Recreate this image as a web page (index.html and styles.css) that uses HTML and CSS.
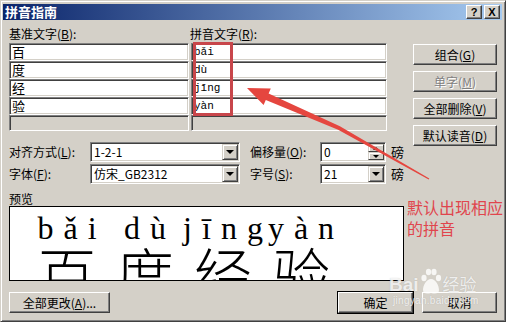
FILE: index.html
```html
<!DOCTYPE html>
<html lang="zh">
<head>
<meta charset="utf-8">
<title>拼音指南</title>
<link rel="stylesheet" href="styles.css">
</head>
<body>
<div class="dialog">
  <div class="titlebar">
    <span class="title">拼音指南</span>
    <span class="tbtn">?</span>
    <span class="tbtn">X</span>
  </div>

  <div class="main">
    <div class="table">
      <div class="labels">
        <span class="lab-base">基准文字(<u>B</u>):</span>
        <span class="lab-py">拼音文字(<u>R</u>):</span>
      </div>
      <div class="rows">
        <div class="cell base">百</div><div class="cell py">bǎi</div>
        <div class="cell base">度</div><div class="cell py">dù</div>
        <div class="cell base">经</div><div class="cell py">jīng</div>
        <div class="cell base">验</div><div class="cell py">yàn</div>
        <div class="cell base empty"></div><div class="cell py empty"></div>
      </div>
    </div>

    <div class="side">
      <div class="btn">组合(<u>G</u>)</div>
      <div class="btn disabled">单字(<u>M</u>)</div>
      <div class="btn">全部删除(<u>V</u>)</div>
      <div class="btn">默认读音(<u>D</u>)</div>
    </div>

    <div class="opts">
      <div class="opt-row">
        <span class="opt-lab">对齐方式(<u>L</u>):</span>
        <div class="field combo wide"><span class="val">1-2-1</span><span class="drop"><i class="tri-down"></i></span></div>
        <span class="opt-lab2">偏移量(<u>O</u>):</span>
        <div class="field combo narrow"><span class="val">0</span><span class="spin"><span class="half"><i class="tri-up"></i></span><span class="half"><i class="tri-down small"></i></span></span></div>
        <span class="unit">磅</span>
      </div>
      <div class="opt-row">
        <span class="opt-lab">字体(<u>F</u>):</span>
        <div class="field combo wide"><span class="val">仿宋_GB2312</span><span class="drop"><i class="tri-down"></i></span></div>
        <span class="opt-lab2">字号(<u>S</u>):</span>
        <div class="field combo narrow"><span class="val">21</span><span class="drop"><i class="tri-down"></i></span></div>
        <span class="unit">磅</span>
      </div>
    </div>

    <div class="preview-block">
      <div class="preview-lab">预览</div>
      <div class="preview">
        <div class="ruby"><span class="rt">bǎi</span><span class="rb">百</span></div>
        <div class="ruby"><span class="rt">dù</span><span class="rb">度</span></div>
        <div class="ruby"><span class="rt">jīng</span><span class="rb">经</span></div>
        <div class="ruby"><span class="rt">yàn</span><span class="rb">验</span></div>
      </div>
    </div>

    <div class="bottom">
      <div class="btn all">全部更改(<u>A</u>)...</div>
      <div class="btn ok">确定</div>
      <div class="btn cancel">取消</div>
    </div>
  </div>

  <!-- annotation drawn on top of the screenshot -->
  <div class="note">默认出现相应<br>的拼音</div>
  <svg class="marks" width="506" height="322" viewBox="0 0 506 322">
    <rect x="193.5" y="42.5" width="37" height="71" fill="none" stroke="#c8464b" stroke-width="3"/>
    <polygon fill="#e5463f" points="246,87 269.8,87.5 267.6,92.6 338.9,125.2 428.3,177.5 427.7,178.5 337.1,128.8 264.8,99 262.6,104.1"/>
  </svg>

  <div class="watermark">
    <div class="wm-logo">
      <span class="wm-bai">Bai</span>
      <svg class="wm-paw" width="22" height="28" viewBox="0 0 22 28">
        <ellipse cx="4" cy="11" rx="2.6" ry="3.2"/>
        <ellipse cx="8.5" cy="5" rx="2.6" ry="3.3"/>
        <ellipse cx="14" cy="5" rx="2.6" ry="3.3"/>
        <ellipse cx="18.5" cy="11" rx="2.6" ry="3.2"/>
        <path d="M11 12 C6 12 3 19 3 23 C3 27 7 27 11 26 C15 27 19 27 19 23 C19 19 16 12 11 12 Z"/>
      </svg>
      <span class="wm-jy">经验</span>
    </div>
    <div class="wm-url">jingyan.baidu.com</div>
  </div>
</div>
</body>
</html>
```

FILE: styles.css
```css
body {
  margin: 0;
  background: #d4d0c8;
  font-family: "Noto Sans CJK SC", "Liberation Sans", sans-serif;
  font-size: 12px;
  color: #000;
}
u { text-decoration: underline; }

.dialog {
  position: relative;
  box-sizing: border-box;
  width: 506px;
  height: 322px;
  padding: 3px 3px 0 2px;
  background: #d4d0c8;
  border: 1px solid;
  border-color: #d4d0c8 #404040 #404040 #d4d0c8;
  box-shadow: inset 1px 1px #fff, inset -1px -1px #808080;
  overflow: hidden;
}

/* title bar */
.titlebar {
  display: flex;
  align-items: center;
  height: 16px;
  padding-left: 2px;
  background: linear-gradient(to right, #0a246a, #a6caf0);
}
.title {
  flex: 1;
  color: #fff;
  font-weight: bold;
  font-size: 13px;
  line-height: 16px;
}
.tbtn {
  box-sizing: border-box;
  width: 16px;
  height: 14px;
  margin-right: 2px;
  background: #d4d0c8;
  border: 1px solid;
  border-color: #fff #404040 #404040 #fff;
  box-shadow: inset -1px -1px #808080;
  font-family: "Liberation Sans", sans-serif;
  font-weight: bold;
  font-size: 11px;
  line-height: 12px;
  text-align: center;
}

/* main layout */
.main {
  display: grid;
  grid-template-columns: 395px 84px;
  column-gap: 9px;
  padding: 6px 0 0 6px;
}

.table { grid-column: 1; grid-row: 1; }
.labels {
  display: flex;
  height: 16px;
  line-height: 16px;
  margin-bottom: 1px;
}
.lab-base { width: 181px; }

.rows {
  display: grid;
  grid-template-columns: 180px 196px;
  grid-template-rows: repeat(4, 18px) 16px;
  column-gap: 2px;
}

.field, .cell {
  box-sizing: border-box;
  background: #fff;
  border: 1px solid;
  border-color: #808080 #fff #fff #808080;
  box-shadow: inset 1px 1px #404040, inset -1px -1px #d4d0c8;
}
.cell {
  padding-left: 2px;
  line-height: 16px;
}
.cell.base { font-size: 13px; }
.cell.py {
  font-family: "Liberation Mono", monospace;
  font-size: 11px;
}
.cell.empty { background: #d4d0c8; }

/* side buttons */
.side {
  grid-column: 2;
  grid-row: 1 / span 2;
  align-self: start;
  display: flex;
  flex-direction: column;
  gap: 6px;
  margin-top: 18px;
}

.btn {
  box-sizing: border-box;
  height: 21px;
  background: #d4d0c8;
  border: 1px solid;
  border-color: #fff #404040 #404040 #fff;
  box-shadow: inset -1px -1px #808080;
  line-height: 19px;
  text-align: center;
  font-size: 12px;
}
.btn.disabled {
  color: #808080;
  text-shadow: 1px 1px #fff;
}

/* option rows */
.opts {
  grid-column: 1;
  grid-row: 2;
  margin-top: 11px;
  display: flex;
  flex-direction: column;
  gap: 2px;
}
.opt-row {
  display: flex;
  align-items: center;
  height: 20px;
}
.opt-lab { width: 81px; line-height: 20px; }
.opt-lab2 { width: 70px; margin-left: 10px; line-height: 20px; }
.unit { margin-left: 5px; font-size: 13px; line-height: 20px; }

.combo {
  display: flex;
  align-items: center;
  height: 20px;
  padding: 1px;
}
.combo.wide { width: 150px; }
.combo.narrow { width: 66px; }
.val {
  flex: 1;
  padding-left: 2px;
  line-height: 16px;
  font-size: 12px;
}
.drop, .spin {
  box-sizing: border-box;
  width: 16px;
  height: 16px;
  background: #d4d0c8;
  border: 1px solid;
  border-color: #d4d0c8 #404040 #404040 #d4d0c8;
  box-shadow: inset 1px 1px #fff, inset -1px -1px #808080;
  display: flex;
  align-items: center;
  justify-content: center;
}
.spin {
  flex-direction: column;
  border: 0;
  box-shadow: none;
  background: none;
}
.spin .half {
  box-sizing: border-box;
  width: 16px;
  height: 8px;
  background: #d4d0c8;
  border: 1px solid;
  border-color: #d4d0c8 #404040 #404040 #d4d0c8;
  box-shadow: inset 1px 1px #fff;
  display: flex;
  align-items: center;
  justify-content: center;
}
.tri-down {
  width: 0;
  height: 0;
  border-left: 4px solid transparent;
  border-right: 4px solid transparent;
  border-top: 4px solid #000;
}
.tri-down.small, .tri-up {
  border-left-width: 3px;
  border-right-width: 3px;
  border-top-width: 3px;
}
.tri-up {
  width: 0;
  height: 0;
  border-left: 3px solid transparent;
  border-right: 3px solid transparent;
  border-bottom: 3px solid #000;
}

/* preview */
.preview-block {
  grid-column: 1;
  grid-row: 3;
}
.preview-lab {
  margin-top: 8px;
  line-height: 14px;
}
.preview {
  box-sizing: border-box;
  height: 75px;
  background: #fff;
  border: 1px solid #000;
  overflow: hidden;
  display: grid;
  grid-template-columns: repeat(4, 78px);
  padding: 5px 0 0 18px;
}
.ruby {
  display: flex;
  flex-direction: column;
  align-items: center;
}
.rt {
  font-family: "Liberation Serif", serif;
  font-size: 32px;
  line-height: 32px;
  letter-spacing: 10px;
  margin-right: -10px;
}
.rb {
  margin-top: -2px;
  font-size: 58px;
  line-height: 60px;
  font-weight: 300;
}

/* bottom buttons */
.bottom {
  grid-column: 1 / -1;
  grid-row: 4;
  display: flex;
  margin-top: 11px;
}
.btn.all { width: 101px; }
.btn.ok {
  width: 75px;
  margin-left: auto;
  outline: 1px solid #000;
}
.btn.cancel { width: 75px; margin-left: 9px; }

/* annotation overlay */
.note {
  position: absolute;
  left: 406px;
  top: 196px;
  color: #e0454d;
  font-size: 16px;
  line-height: 21px;
}
.marks {
  position: absolute;
  left: 0;
  top: 0;
  pointer-events: none;
}

.watermark {
  position: absolute;
  left: 388px;
  top: 266px;
  color: rgba(255, 255, 255, 0.8);
  text-shadow: 0 0 1px rgba(120, 120, 120, 0.4);
}
.wm-logo {
  display: flex;
  align-items: flex-end;
  height: 28px;
}
.wm-bai {
  font-family: "Liberation Sans", sans-serif;
  font-weight: bold;
  font-size: 19px;
  line-height: 20px;
}
.wm-paw { fill: rgba(255, 255, 255, 0.8); margin: 0 1px; }
.wm-jy {
  font-size: 17px;
  line-height: 22px;
}
.wm-url {
  font-family: "Liberation Sans", sans-serif;
  font-size: 10px;
  line-height: 12px;
  padding-left: 4px;
  letter-spacing: 0.3px;
}
```
